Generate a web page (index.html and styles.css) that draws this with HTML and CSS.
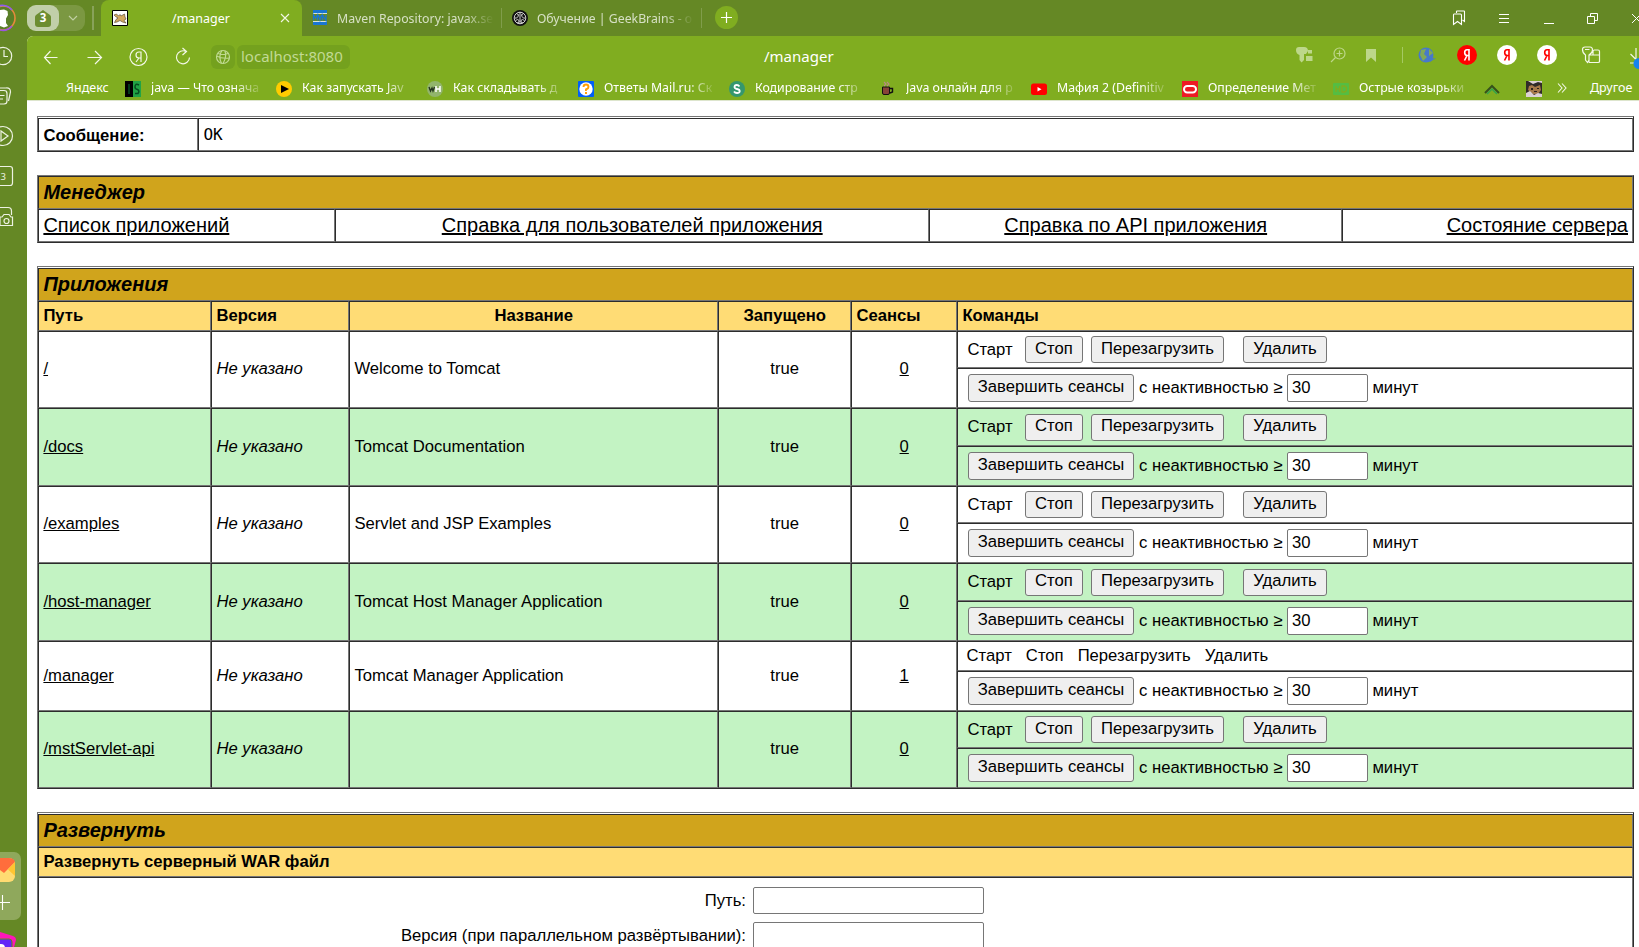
FILE: index.html
```html
<!DOCTYPE html>
<html lang="ru">
<head>
<meta charset="utf-8">
<title>/manager</title>
<link rel="stylesheet" href="styles.css">
</head>
<body>
<div class="window">
  <header class="tabbar">
    <svg class="avatar" width="16" height="32" viewBox="0 0 16 32"><circle cx="3" cy="18" r="12" fill="#5a7f28" stroke="#e58a3c" stroke-width="1.6"/><path d="M-5 8A12 12 0 0 1 12 10" fill="none" stroke="#8b5cf0" stroke-width="1.6"/><path d="M12 26A12 12 0 0 1 0 30" fill="none" stroke="#9a55e0" stroke-width="1.6"/><path d="M0 10L4 9.500L7.500 11L8 15L6 18.500V23L8 26L4 27.500L0 26Z" fill="#fff"/></svg>
    <div class="group"><span class="count"><svg width="18" height="19" viewBox="0 0 18 19"><path d="M9 1L16 6Q17 7 17 8V15Q17 18 14 18H4Q1 18 1 15V8Q1 7 2 6Z" fill="#6c8d30"/></svg><b>3</b></span><svg class="chev" width="10" height="6" viewBox="0 0 10 6"><path d="M1 1L5 5L9 1" fill="none" stroke="#c0cfa3" stroke-width="1.2"/></svg></div>
    <span class="groupline"></span>
    <div class="tab active">
      <svg width="16" height="16" viewBox="0 0 16 16"><path d="M.5.5H15.5V15.5H.5Z" fill="#fff" stroke="#000"/><path d="M2 5L4.500 4L6.500 6L8 4.500L9 6L12.500 4L13 7L14 9L12 10.500L14 13L10.500 12L8 10.500L5 12L2.500 12.500L4 9.500L6 8L3.500 6.500Z" fill="#d3a960" stroke="#60523e" stroke-width=".7"/></svg>
      <span class="tabname">/manager</span>
      <svg class="close" width="10" height="10" viewBox="0 0 10 10"><path d="M1 1L9 9M9 1L1 9" stroke="#f2f7e5" stroke-width="1.1"/></svg>
    </div>
    <div class="tab second">
      <svg width="16" height="16" viewBox="0 0 16 16"><path d="M1 1.500H15M1 13.500H15" stroke="#1976d2" stroke-width="3"/><path d="M1 3.500H15M1 11.500H15" stroke="#d9e6d8"/><path d="M1.500 10.500V5L3.500 8L5.500 5V10.500M6.500 5L8 10L9.500 5M10.500 10.500V5L14 10.500V5" fill="none" stroke="#1976d2" stroke-width="1.300"/></svg>
      <span class="fade">Maven Repository: javax.se</span>
    </div>
    <div class="tab third">
      <svg width="16" height="16" viewBox="0 0 16 16"><circle cx="8" cy="8" r="8" fill="#111"/><g stroke="#e4e4e4" fill="none" stroke-width=".9"><circle cx="8" cy="8" r="5.800"/><path d="M8 2V14M5 4Q7.500 4 6 6.500T3 8M11 4Q8.500 4 10 6.500T13 8M3.500 10.500Q6 8.500 7 10.500T5 13M12.500 10.500Q10 8.500 9 10.500T11 13"/></g></svg>
      <span class="fade">Обучение | GeekBrains - о</span>
    </div>
    <svg class="newtab" width="23" height="23" viewBox="0 0 23 23"><circle cx="11.5" cy="11.5" r="11.5" fill="#80ad20"/><path d="M11.5 6V17M6 11.5H17" stroke="#fff" stroke-width="1.2"/></svg>
    <div class="wincontrols">
      <svg width="14" height="16" viewBox="0 0 14 16"><path d="M4.5 3V1.5Q4.5 1 5 1H12Q12.5 1 12.5 1.5V11.5L10.5 10M2 4H8.5Q9.5 4 9.5 5V14.5L5.5 11.5L1.5 14.5V5Q1.5 4 2 4Z" fill="none" stroke="#fff" stroke-width="1.1"/></svg>
      <svg width="12" height="11" viewBox="0 0 12 11"><path d="M1 1.500H11M1 5.500H11M1 9.500H11" stroke="#fff"/></svg>
      <svg width="11" height="11" viewBox="0 0 11 11"><path d="M1 10.500H11" stroke="#fff"/></svg>
      <svg width="11" height="11" viewBox="0 0 11 11"><path d="M.5 3.500H7.500V10.500H.500ZM3.500 3.500V.500H10.500V7.500H7.500" fill="none" stroke="#fff"/></svg>
      <svg width="11" height="11" viewBox="0 0 11 11"><path d="M1 1L10 10M10 1L1 10" stroke="#fff"/></svg>
    </div>
  </header>
  <div class="body">
    <aside class="side">
      <svg width="27" height="190" viewBox="0 0 27 190"><g fill="none" stroke="#edf2e3" stroke-width="1.200"><circle cx="3" cy="20" r="8.700"/><path d="M4 14V20.500H8M-2 54.500H4Q7 54.500 7 57.500V65Q7 68 4 68H-2M0 52H6Q10.500 51.500 10.500 56L8.500 65M-1 59.500H4.500M-1 63H3"/><circle cx="3" cy="100" r="9.500"/><path d="M1 95V105L8 100Z"/><path d="M-2 130.500H10Q12.500 130.500 12.500 133V147Q12.500 149.500 10 149.500H-2M-1 171.500H8Q11.500 171.500 11.500 175V179M0 181H2L4 178.500H9L11 181H12.500V189.500H0Z"/><circle cx="6.500" cy="185" r="2.500"/></g><text x="0.500" y="143.500" class="sidenum">3</text></svg>
      <svg class="dock" width="27" height="95" viewBox="0 0 27 95"><rect x="-10" y="0" width="31" height="68" rx="7" fill="#8fa85c"/><rect x="-8" y="6" width="23" height="24" rx="6" fill="#ffdb72"/><path d="M-8 6H9Q14 6 15 10L4 21L-8 12Z" fill="#ff6d3c"/><path d="M15 10V24L8 17.500Z" fill="#ffc531"/><path d="M2.500 43V58M-5 50.500H10" stroke="#fff" stroke-width="1.100"/><path d="M0 80L13 84Q16 85 16 88L14 95H0Z" fill="#ff16b9"/><rect x="-5" y="87" width="17" height="14" rx="3" fill="#6224f7" stroke="#68821d"/><circle cx="1" cy="96" r="4" fill="#fff"/></svg>
    </aside>
    <div class="content">
      <div class="toolbar">
        <svg class="nav" width="170" height="20" viewBox="0 0 170 20"><g fill="none" stroke="#f3f8e8" stroke-width="1.200"><path d="M14.500 10.500H1.500M7.500 4L1.500 10.500L7.500 17M44.500 10.500H58.500M52 4L58.500 10.500L52 17"/><circle cx="95.500" cy="10" r="8.500"/><path d="M98 15V5H96Q93 5 93 8T96 11H98M96 11L93 15"/><path d="M143 4.500A6.500 6.500 0 1 0 146.500 10.500M139.500 1L143.500 4.500L139.500 8"/></g></svg>
        <span class="globe"><svg width="16" height="16" viewBox="0 0 16 16"><g fill="none" stroke="#c0da91" stroke-width="1.200"><circle cx="8" cy="8" r="6.500"/><path d="M7 1.500Q3 7 6.500 14.500M10 2Q12 8 8 14.500M1.500 7Q7 10 14.500 9M3 4.500Q8 6.500 13 4.500"/></g></svg></span>
        <span class="url">localhost:8080</span>
        <span class="doctitle">/manager</span>
        <svg class="tools" width="343" height="24" viewBox="0 0 343 24"><g fill="#bdd78a"><path d="M0 5Q0 2 3 2H8Q12 2 12 6L10 9H8V15L5.500 17.500L3.500 15V10Q0 9 0 5Z"/><path d="M12 5H16V8.500H12ZM10 11H16.500V16H10Z"/><path d="M70 4H80V17L75 12.500L70 17Z"/></g><g fill="none" stroke="#bdd78a" stroke-width="1.200"><circle cx="43.500" cy="8.500" r="5.500"/><path d="M43.500 5.500V11.500M40.500 8.500H46.500M39.500 12.500L35 17"/><path d="M106.500 2V18" stroke="#a5c963" stroke-width="1"/></g><circle cx="130" cy="10" r="7.500" fill="#4779c9"/><path d="M125 5L130 4L128 9L131 12L127 16L124 10ZM133 4L137 8L133 11Z" fill="#83a956"/><path d="M132 14L140 13L134 17Z" fill="#4779c9"/><circle cx="171" cy="10" r="10" fill="#f00"/><circle cx="211" cy="10" r="10" fill="#fff"/><circle cx="251" cy="10" r="10" fill="#fff"/><g fill="none" stroke-width="1.600"><path d="M173 15.500V4.800H171Q168.700 4.800 168.700 7.500T171 10.500H173M171 10.500L168.500 15.500" stroke="#fff"/><path d="M213 15.500V4.800H211Q208.700 4.800 208.700 7.500T211 10.500H213M211 10.500L208.500 15.500M253 15.500V4.800H251Q248.700 4.800 248.700 7.500T251 10.500H253M251 10.500L248.500 15.500" stroke="#f00"/></g><g fill="none" stroke="#f3f8e8" stroke-width="1.200"><path d="M293 15L291.500 17.500L289.500 15V10Q286.500 8 286.500 4.500Q286.500 2 289 2H294Q296.500 2 296.500 5Q296.500 8 293 10V17.500M289 4.500H293.500M293 10H303.500V16.500Q303.500 17.500 302 17.500H293M297 10V6.500Q297 5 298.500 5H302Q303.500 5 303.500 6.500V10"/><path d="M340 3V14M334.500 9L340 14.500M334 18H343"/></g><circle cx="343" cy="18.500" r="5.500" fill="#1683ed"/></svg>
      </div>
      <nav class="marks">
        <span class="mark m0"><span>Яндекс</span></span>
        <span class="mark"><svg width="16" height="16" viewBox="0 0 16 16"><path d="M0 0H8V16H0Z" fill="#000"/><path d="M8 0H16V16H8Z" fill="#21a345"/><path d="M4 3V13M14 4Q10 2 10 6Q10 8 12.500 8.500Q15 10 13 12.500H10" fill="none" stroke="#064f20" stroke-width="1.500"/></svg><span class="fade">java — Что означа</span></span>
        <span class="mark"><svg width="16" height="16" viewBox="0 0 16 16"><circle cx="8" cy="8" r="8" fill="#fc0"/><path d="M5 4L13 8L5 12Z"/></svg><span class="fade">Как запускать Jav</span></span>
        <span class="mark"><svg width="16" height="16" viewBox="0 0 16 16"><circle cx="8" cy="8" r="8" fill="#92b56c"/><path d="M2 6L3.500 10L5 7L6 10L7.500 6" fill="none" stroke="#253520" stroke-width="1.400"/><path d="M9 5V11M13 5V11M9 8H13" stroke="#fff" stroke-width="1.500"/></svg><span class="fade">Как складывать д</span></span>
        <span class="mark"><svg width="16" height="16" viewBox="0 0 16 16"><rect width="16" height="16" rx="1" fill="#005ff9"/><circle cx="8" cy="8" r="6.700" fill="#fff"/><path d="M5.500 6Q5.500 3.500 8 3.500T10.500 6Q10.500 7.500 8 8.500V10M8 11V13" fill="none" stroke="#ff9e00" stroke-width="1.900"/></svg><span class="fade">Ответы Mail.ru: Ск</span></span>
        <span class="mark"><svg width="16" height="16" viewBox="0 0 16 16"><circle cx="8" cy="8" r="8" fill="#35976e"/><path d="M10.500 5.500Q9.500 4 7.800 4Q5.500 4 5.500 6Q5.500 7.500 8 8Q10.700 8.500 10.700 10.300Q10.500 12 8 12Q6 12 5 10.500" fill="none" stroke="#fff" stroke-width="1.800"/></svg><span class="fade">Кодирование стр</span></span>
        <span class="mark"><svg width="16" height="16" viewBox="0 0 16 16"><path d="M2.500 6H9.500V12Q9.500 13.500 8 13.500H4Q2.500 13.500 2.500 12Z" fill="#874238" stroke="#111"/><path d="M10 7.500H12.500V11L10 12" fill="none" stroke="#111" stroke-width="1.400"/><path d="M4 5L6 3L4 1M7 5L9 3L7 1" fill="none" stroke="#b98a85" stroke-width="1.100"/></svg><span class="fade">Java онлайн для р</span></span>
        <span class="mark"><svg width="16" height="16" viewBox="0 0 16 16"><rect y="2.500" width="16" height="11.500" rx="2.500" fill="#f00"/><path d="M6.500 6V10.500L10.500 8.200Z" fill="#fff"/></svg><span class="fade">Мафия 2 (Definitiv</span></span>
        <span class="mark"><svg width="16" height="16" viewBox="0 0 16 16"><path d="M0 0H16V16H0Z" fill="#ed1b24"/><rect x="2" y="5" width="12" height="6.500" rx="3.200" fill="none" stroke="#fff" stroke-width="2"/></svg><span class="fade">Определение Мет</span></span>
        <span class="mark"><svg width="16" height="16" viewBox="0 0 16 16"><rect y="2" width="16" height="12" rx="1" fill="#55bd42"/><path d="M3 5V11M6.500 5V11M3 8H6.500M9 5H11Q13.500 5 13.500 8T11 11H9Z" fill="none" stroke="#80ad20" stroke-width="1.300"/></svg><span class="fade">Острые козырьки</span></span>
        <span class="mark tail"><svg width="16" height="16" viewBox="0 0 16 16"><path d="M1 12L8 5L15 12" fill="none" stroke="#36521c" stroke-width="2"/><path d="M3 13L8 8L13 13" fill="none" stroke="#34a34b" stroke-width="1.500"/></svg>
        <svg class="cat" width="16" height="16" viewBox="0 0 16 16"><path d="M0 0H16V16H0Z" fill="#302b28"/><path d="M3 5L6 4L9 6L14 4L15 9L12 13L7 13L2 9Z" fill="#a67949"/><path d="M0 16V12L4 10L8 14L12 12L16 13V16ZM2 0L7 3L12 1L16 2V0Z" fill="#ddd2d4"/><path d="M5 7H7V9H5ZM11 7H13V8H11ZM8 10H11V11H8Z" fill="#2b211b"/></svg>
        <svg class="more" width="10" height="10" viewBox="0 0 10 10"><path d="M1 .500L5 5L1 9.500M5 .500L9 5L5 9.500" fill="none" stroke="#f3f8e8" stroke-width="1.100"/></svg>
        <span>Другое</span></span>
      </nav>
      <main class="page">
        <section class="table gap message"><div class="cell msglabel"><b>Сообщение:</b></div><div class="cell mono">OK</div></section>
        <section class="table manager"><h2 class="cell title">Менеджер</h2>
          <div class="cell"><a>Список приложений</a></div><div class="cell center"><a>Справка для пользователей приложения</a></div><div class="cell center"><a>Справка по API приложения</a></div><div class="cell right"><a>Состояние сервера</a></div></section>
        <section class="table gap apps" id="apps"><h2 class="cell title">Приложения</h2>
          <div class="cell head">Путь</div><div class="cell head">Версия</div><div class="cell head center">Название</div><div class="cell head center">Запущено</div><div class="cell head">Сеансы</div><div class="cell head">Команды</div></section>
        <section class="table gap deploy"><h2 class="cell title">Развернуть</h2><div class="cell head">Развернуть серверный WAR файл</div>
          <div class="cell form"><label>Путь:</label><input type="text"><label>Версия (при параллельном развёртывании):</label><input type="text"></div></section>
      </main>
    </div>
  </div>
</div>
<script src="apps.js"></script>
</body>
</html>
```
FILE: apps.js
```js
const apps = [
  { path: "/", name: "Welcome to Tomcat", sessions: 0, raised: true },
  { path: "/docs", name: "Tomcat Documentation", sessions: 0 },
  { path: "/examples", name: "Servlet and JSP Examples", sessions: 0, raised: true },
  { path: "/host-manager", name: "Tomcat Host Manager Application", sessions: 0 },
  { path: "/manager", name: "Tomcat Manager Application", sessions: 1, locked: true },
  { path: "/mstServlet-api", name: "", sessions: 0, raised: true }
];
const rows = apps.map((app, i) => {
  const tint = i % 2 ? "green" : "";
  const cls = `${tint} ${app.raised ? "raised" : ""}`;
  const actions = app.locked
    ? `<div class="cell actions locked ${tint}"><span>Старт</span><span>Стоп</span><span>Перезагрузить</span><span>Удалить</span></div>`
    : `<div class="cell actions ${tint}"><span class="start">Старт</span><button class="stop">Стоп</button><button class="reload">Перезагрузить</button><button class="remove">Удалить</button></div>`;
  return `<div class="cell ${cls}"><a>${app.path}</a></div>
    <div class="cell ${cls}"><i>Не указано</i></div>
    <div class="cell ${cls}">${app.name}</div>
    <div class="cell center ${cls}">true</div>
    <div class="cell center ${cls}"><a>${app.sessions}</a></div>
    <div class="commands">${actions}<div class="cell expire ${tint}"><button class="finish">Завершить сеансы</button><span class="idle">с неактивностью ≥</span><input type="text" value="30"><span>минут</span></div></div>`;
});
document.getElementById("apps").insertAdjacentHTML("beforeend", rows.join(""));
```
FILE: styles.css
```css
* { box-sizing: border-box; }
body { margin: 0; }
svg { display: block; flex: none; }
.window { width: 1639px; height: 947px; overflow: hidden; background: #658825; font-family: "Noto Sans", sans-serif; font-size: 12.5px; color: #fff; white-space: nowrap; }
.tabbar { height: 36px; display: flex; }
.avatar { margin-right: 11px; }
.group { width: 58px; height: 26px; margin-top: 5px; border-radius: 9px; background: #7b9842; display: flex; align-items: center; }
.count { width: 32px; height: 26px; border-radius: 9px; background: #c1cfa9; display: grid; place-items: center; margin-right: 9px; }
.count svg, .count b { grid-area: 1 / 1; }
.count b { font-size: 11.5px; line-height: 14px; }
.groupline { width: 2px; height: 24px; background: #88a25a; margin: 6px 7px 0 7px; }
.tab { height: 36px; display: flex; align-items: center; }
.tab > svg { margin-right: 9px; }
.active { width: 201px; padding: 0 12px 0 11px; background: #80ad20; border-radius: 8px 8px 0 0; }
.tabname { flex: 1; text-align: center; padding-right: 15px; }
.tab > .close { margin: 0; }
.second, .third { width: 200px; padding-left: 10px; border-right: 1px solid #809d4b; height: 20px; margin-top: 8px; color: #d6e0c4; }
.fade { mask-image: linear-gradient(90deg, #000 calc(100% - 30px), transparent); }
.second .fade, .third .fade { width: 157px; font-size: 12.3px; }
.newtab { margin: 6px 0 0 13px; }
.wincontrols { margin-left: auto; margin-right: -3px; display: flex; gap: 33px; align-items: center; }
.wincontrols svg:nth-child(1) { margin-right: -1px; }
.body { display: flex; height: 911px; }
.side { width: 27px; flex: none; display: flex; flex-direction: column; justify-content: space-between; }
.sidenum { font: 9.5px "Noto Sans", sans-serif; fill: #edf2e3; }
.content { width: 1612px; background: #fff; border-top-left-radius: 6px; overflow: hidden; }
.toolbar { height: 42px; background: #80ad20; display: flex; align-items: center; padding-bottom: 1px; }
.nav { margin: 0 14px 0 16px; }
.globe, .url { height: 24px; background: #74a11e; border-radius: 6px; display: flex; align-items: center; }
.globe { width: 24px; justify-content: center; margin: 0 2px 0 -16px; }
.url { width: 113px; padding: 0 0 1px 4px; color: #c2da94; font-size: 15px; }
.doctitle { flex: 1; padding: 0 0 1px 414px; font-size: 15px; }
.marks { height: 23px; background: #80ad20; display: flex; border-bottom: 1px solid #dde5cd; }
.mark { width: 151px; height: 20px; display: flex; align-items: center; flex: none; line-height: 16px; padding-top: 0; }
.mark > svg { margin: 2px 10px 0 0; }
.mark > .fade { width: 113px; font-size: 12.3px; }
.m0 { width: 98px; padding-left: 39px; }
.tail { width: auto; }
.tail > svg { margin-right: 26px; }
.tail > .cat { margin-right: 15px; }
.tail > .more { margin-right: 23px; margin-top: 0; }
.page { padding: 15px 0 0 10px; font-family: "Liberation Sans", Arial, sans-serif; font-size: 16.667px; color: #000; }
.table { width: 1597px; display: grid; border: 1px solid #767676; border-right-color: #2c2c2c; border-bottom-color: #2c2c2c; margin-bottom: 23px; }
.gap { padding-top: 1px; }
.cell { border: 1px solid #2c2c2c; border-right-color: #767676; border-bottom-color: #767676; padding: 0 4px 0 4.4px; display: flex; align-items: center; min-width: 0; }
.cell a { text-decoration: underline; }
.message { grid-template-columns: 160px 1fr; grid-template-rows: 33px; }
.msglabel { padding-top: 2px; }
.mono { font-family: "DejaVu Sans Mono", monospace; font-size: 16px; }
.title { grid-column: 1 / -1; margin: 0; background: #d0a41c; font-size: 20px; font-style: italic; }
.manager { grid-template-columns: 297px 594px 413px 1fr; grid-template-rows: 33px 33px; font-size: 20px; }
.center { justify-content: center; }
.right { justify-content: flex-end; }
.apps { grid-template-columns: 173px 138px 369px 133px 106px 676px; grid-template-rows: 33px 30px 77px 78px 77px 78px 70px 77px; }
.head { background: #ffdc75; font-weight: bold; }
.green { background: #c3f3c3; }
.raised { padding-bottom: 2px; }
.commands { display: grid; grid-template-rows: 1fr 40px; }
.actions { padding: 0 9.4px; }
button, input { font-family: "Liberation Sans", Arial, sans-serif; font-size: 16.667px; color: #000; height: 27px; border: 1px solid #767676; border-radius: 3px; margin: 0; }
button { background: #efefef; padding: 0 0 2px; line-height: 22px; flex: none; }
input { background: #fff; padding: 0 4px; border-radius: 2px; }
.start { width: 57.6px; }
.stop { width: 58px; margin-right: 8px; }
.reload { width: 133px; margin-right: 19px; }
.remove { width: 84px; }
.locked { padding: 0 8.6px; gap: 14px; }
.expire { padding: 0 10px; }
.finish { width: 166px; margin-right: 5px; }
.idle { width: 148px; }
.expire input { width: 81px; margin-right: 4.4px; }
.finish, .expire input { height: 28px; }
.deploy { grid-template-rows: 33px 30px 200px; }
.form { display: grid; grid-template-columns: 707px 231px; grid-auto-rows: 27px; gap: 8px 7px; padding: 9px 0; align-content: start; align-items: center; }
.form label { text-align: right; }
```
